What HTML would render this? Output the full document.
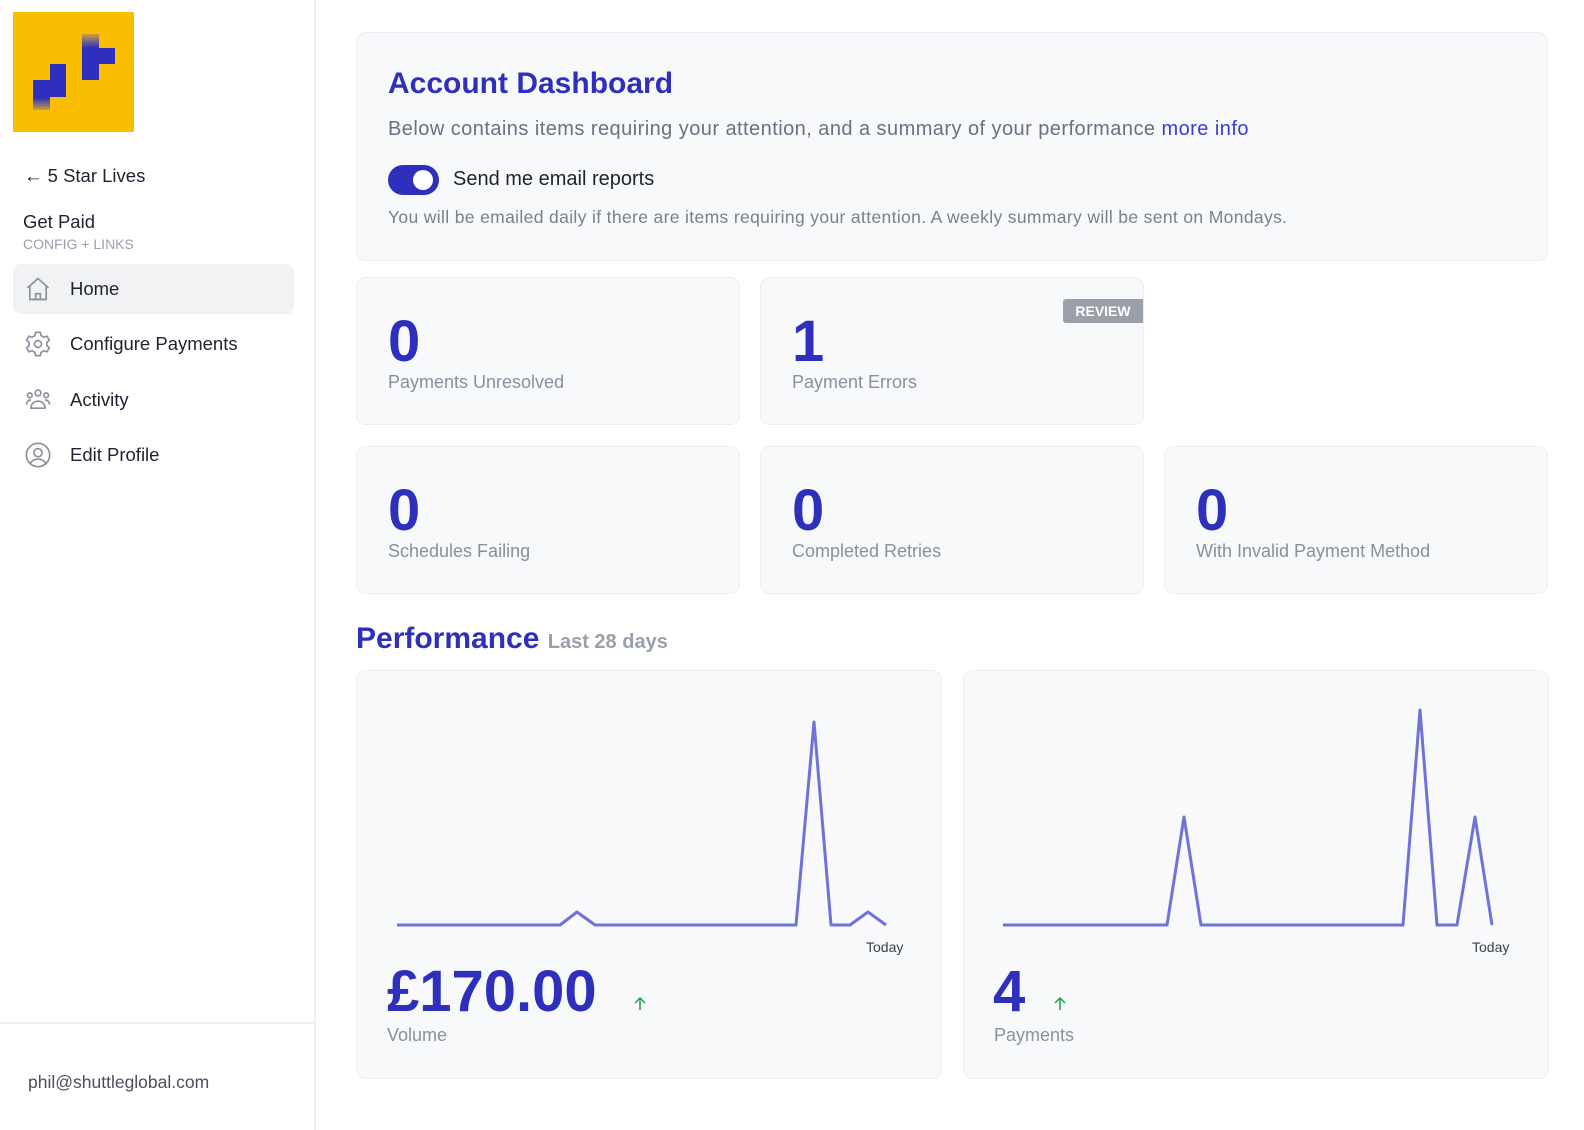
<!DOCTYPE html><html><head><meta charset="utf-8"><style>
*{box-sizing:border-box;margin:0;padding:0}
body{width:1584px;height:1130px;background:#fff;font-family:"Liberation Sans",sans-serif;position:relative;overflow:hidden;color:#1f2230}
.abs{position:absolute}
.side{left:0;top:0;width:316px;height:1130px;border-right:2px solid #eef0f3}
.nav{position:absolute;left:13px;width:281px;height:50px;border-radius:8px;display:flex;align-items:center;font-size:18.5px;color:#1f2230}
.nav svg{margin-left:11px;margin-right:18px}
.card{position:absolute;background:#f8f9fb;border:1px solid #eceef2;border-radius:10px}
.big{font-family:"Liberation Sans",sans-serif;font-weight:bold;color:#2f2fbe}
.lbl{color:#8a8f9c;font-size:18px}
.stat .big{position:absolute;left:31px;top:30px;font-size:58px}
.stat .lbl{position:absolute;left:31px;top:94px}
</style></head><body>
<div class="abs side">
 <div class="abs" style="left:13px;top:12px;width:121px;height:120px;background:#fbbd00">
  <div class="abs" style="left:37px;top:52px;width:16px;height:33px;background:#2f2fbe"></div>
  <div class="abs" style="left:20px;top:68px;width:17px;height:30px;background:linear-gradient(#2f2fbe 60%,#c9a140)"></div>
  <div class="abs" style="left:69px;top:22px;width:17px;height:46px;background:linear-gradient(#c9a140,#2f2fbe 30%)"></div>
  <div class="abs" style="left:86px;top:36px;width:16px;height:16px;background:#2f2fbe"></div>
 </div>
 <div class="abs" style="left:24px;top:165px;font-size:18.5px">&#8592; 5 Star Lives</div>
 <div class="abs" style="left:23px;top:211px;font-size:18.5px">Get Paid</div>
 <div class="abs" style="left:23px;top:236px;font-size:14px;color:#9aa0ab">CONFIG + LINKS</div>
 <div class="nav" style="top:264px;background:#f1f2f4"><svg width="28" height="28" viewBox="0 0 24 24" fill="none" stroke="#8a8f9c" stroke-width="1.4"><path d="M3 11L12 3l9 8M5 9v12h14V9M10 21v-5h4v5"/></svg>Home</div>
 <div class="nav" style="top:319px"><svg width="28" height="28" viewBox="0 0 24 24" fill="none" stroke="#8a8f9c" stroke-width="1.4"><circle cx="12" cy="12" r="3"/><path d="M10 2h4l.6 2.8 2.4 1.4 2.7-.9 2 3.4-2.1 1.9v2.8l2.1 1.9-2 3.4-2.7-.9-2.4 1.4L14 22h-4l-.6-2.8-2.4-1.4-2.7.9-2-3.4 2.1-1.9v-2.8L2.3 8.7l2-3.4 2.7.9 2.4-1.4z"/></svg>Configure Payments</div>
 <div class="nav" style="top:375px"><svg width="28" height="28" viewBox="0 0 24 24" fill="none" stroke="#8a8f9c" stroke-width="1.4"><circle cx="12" cy="6" r="2.5"/><circle cx="5" cy="8" r="2"/><circle cx="19" cy="8" r="2"/><path d="M6 19c0-4 3-6 6-6s6 2 6 6zM2 16c0-2 1.5-4 4-4M22 16c0-2-1.5-4-4-4"/></svg>Activity</div>
 <div class="nav" style="top:430px"><svg width="28" height="28" viewBox="0 0 24 24" fill="none" stroke="#8a8f9c" stroke-width="1.4"><circle cx="12" cy="12" r="10"/><circle cx="12" cy="10" r="3.5"/><path d="M5.5 19c1.5-2.5 4-3.5 6.5-3.5s5 1 6.5 3.5"/></svg>Edit Profile</div>
 <div class="abs" style="left:0;top:1022px;width:314px;height:2px;background:#eef0f3"></div>
 <div class="abs" style="left:28px;top:1072px;font-size:17.5px;color:#4a4f5c">phil@shuttleglobal.com</div>
</div>

<div class="card" style="left:356px;top:32px;width:1192px;height:229px">
 <div class="abs big" style="left:31px;top:34px;font-size:30px">Account Dashboard</div>
 <div class="abs" style="left:31px;top:85px;font-size:20px;letter-spacing:0.45px;color:#6b7080">Below contains items requiring your attention, and a summary of your performance <span style="color:#3b3bd6">more info</span></div>
 <div class="abs" style="left:31px;top:132px;width:51px;height:30px;border-radius:15px;background:#2f2fbe"><div class="abs" style="left:25px;top:5px;width:20px;height:20px;border-radius:50%;background:#fff"></div></div>
 <div class="abs" style="left:96px;top:135px;font-size:20px;color:#1f2230">Send me email reports</div>
 <div class="abs" style="left:31px;top:174px;font-size:17.5px;letter-spacing:0.35px;color:#7a7f8c">You will be emailed daily if there are items requiring your attention. A weekly summary will be sent on Mondays.</div>
</div>

<div class="card stat" style="left:356px;top:277px;width:384px;height:148px"><div class="big">0</div><div class="lbl">Payments Unresolved</div></div>
<div class="card stat" style="left:760px;top:277px;width:384px;height:148px"><div class="big">1</div><div class="lbl">Payment Errors</div>
 <div class="abs" style="right:0;top:21px;width:80px;height:24px;background:#9a9fab;color:#fff;font-size:14px;font-weight:bold;text-align:center;line-height:24px;border-radius:3px 0 0 3px">REVIEW</div></div>
<div class="card stat" style="left:356px;top:446px;width:384px;height:148px"><div class="big">0</div><div class="lbl">Schedules Failing</div></div>
<div class="card stat" style="left:760px;top:446px;width:384px;height:148px"><div class="big">0</div><div class="lbl">Completed Retries</div></div>
<div class="card stat" style="left:1164px;top:446px;width:384px;height:148px"><div class="big">0</div><div class="lbl">With Invalid Payment Method</div></div>

<div class="abs big" style="left:356px;top:622px;font-size:30px">Performance <span style="font-weight:bold;font-size:20px;color:#9aa0ab">Last 28 days</span></div>

<div class="card" style="left:356px;top:670px;width:586px;height:409px"></div>
<div class="card" style="left:963px;top:670px;width:586px;height:409px"></div>
<svg class="abs" style="left:0;top:0" width="1584" height="1130">
 <g fill="none" stroke="#6f72d8" stroke-width="3" stroke-linejoin="round">
  <polyline points="397,925 560,925 577,912 595,925 796,925 814,722 831,925 850,925 868,912 886,925"/>
  <polyline points="1003,925 1167,925 1184,817 1201,925 1403,925 1420,710 1437,925 1457,925 1475,817 1492,925"/>
 </g>
 <g stroke="#16a34a" stroke-width="1.5" fill="none"><path d="M640 1010V998M635 1003l5-5 5 5"/><path d="M1060 1010V998M1055 1003l5-5 5 5"/></g>
</svg>
<div class="abs" style="left:866px;top:939px;font-size:14px;color:#3a3f4c">Today</div>
<div class="abs" style="left:1472px;top:939px;font-size:14px;color:#3a3f4c">Today</div>
<div class="abs big" style="left:387px;top:958px;font-size:58px">£170.00</div>
<div class="abs lbl" style="left:387px;top:1025px">Volume</div>
<div class="abs big" style="left:993px;top:958px;font-size:58px">4</div>
<div class="abs lbl" style="left:994px;top:1025px">Payments</div>
</body></html>
